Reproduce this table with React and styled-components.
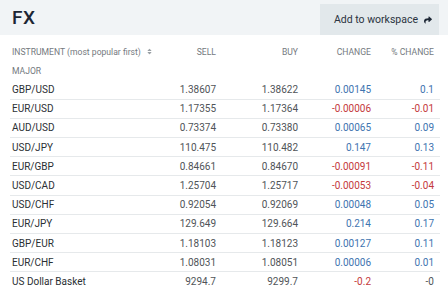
import React from 'react';
import styled, { createGlobalStyle } from 'styled-components';
import { FaShare, FaSort } from 'react-icons/fa';

const GlobalStyle = createGlobalStyle`
  html, body {
    margin: 0;
    padding: 0;
    background: #fff;
    font-family: Roboto, "Liberation Sans", Arial, sans-serif;
  }
`;

const Page = styled.div`
  width: 448px;
  height: 291px;
  overflow: hidden;
  background: #fff;
`;

const Header = styled.header`
  display: flex;
  align-items: flex-end;
  justify-content: space-between;
  height: 35px;
  padding: 0 9px 0 12px;
  background: #f1f4f6;
`;

const Title = styled.h1`
  margin: 0;
  align-self: center;
  font-size: 19px;
  font-weight: 500;
  color: #1c2634;
  letter-spacing: 0.5px;
`;

const WorkspaceBtn = styled.button`
  display: flex;
  align-items: center;
  gap: 6px;
  height: 31px;
  padding: 0 7px 0 14px;
  border: none;
  background: #e2e8eb;
  color: #2a3340;
  font-family: inherit;
  font-size: 10.5px;
  cursor: pointer;
  svg {
    width: 8px;
    height: 8px;
    color: #1c2634;
  }
`;

const Table = styled.div`
  padding: 7px 8px 0 10px;
`;

const Row = styled.div`
  display: grid;
  grid-template-columns: minmax(0, 1fr) 80px 82px 73px 63px;
  align-items: center;
  height: ${p => p.$h || 18.2}px;
  padding: 0 6px 0 2px;
  border-bottom: ${p => (p.$line ? '1px solid #e6e9eb' : '1px solid transparent')};
`;

const HeadCell = styled.div`
  font-size: 8.6px;
  color: #74797e;
  white-space: nowrap;
  display: flex;
  align-items: center;
  justify-content: ${p => (p.$left ? 'flex-start' : 'flex-end')};
  gap: 5px;
  svg {
    width: 7px;
    height: 7px;
    flex: none;
    color: #9aa0a5;
  }
`;

const Name = styled.div`
  font-size: 10px;
  color: #2b2f33;
  white-space: nowrap;
`;

const Num = styled.div`
  font-size: 10px;
  text-align: right;
  color: ${p => (p.$tone === 'up' ? '#3e74b0' : p.$tone === 'down' ? '#c4393c' : '#505458')};
`;

const rows = [
  ['GBP/USD', '1.38607', '1.38622', '0.00145', '0.1'],
  ['EUR/USD', '1.17355', '1.17364', '-0.00006', '-0.01'],
  ['AUD/USD', '0.73374', '0.73380', '0.00065', '0.09'],
  ['USD/JPY', '110.475', '110.482', '0.147', '0.13'],
  ['EUR/GBP', '0.84661', '0.84670', '-0.00091', '-0.11'],
  ['USD/CAD', '1.25704', '1.25717', '-0.00053', '-0.04'],
  ['USD/CHF', '0.92054', '0.92069', '0.00048', '0.05'],
  ['EUR/JPY', '129.649', '129.664', '0.214', '0.17'],
  ['GBP/EUR', '1.18103', '1.18123', '0.00127', '0.11'],
  ['EUR/CHF', '1.08031', '1.08051', '0.00006', '0.01'],
  ['US Dollar Basket', '9294.7', '9299.7', '-0.2', '-0'],
];

const tone = v => (v.startsWith('-') ? 'down' : 'up');

export default function App() {
  return (
    <Page>
      <GlobalStyle />
      <Header>
        <Title>FX</Title>
        <WorkspaceBtn>
          Add to workspace <FaShare />
        </WorkspaceBtn>
      </Header>
      <Table>
        <Row $h={19}>
          <HeadCell $left>
            INSTRUMENT (most popular first) <FaSort />
          </HeadCell>
          <HeadCell>SELL</HeadCell>
          <HeadCell>BUY</HeadCell>
          <HeadCell>CHANGE</HeadCell>
          <HeadCell>% CHANGE</HeadCell>
        </Row>
        <Row $h={17.5}>
          <HeadCell $left>MAJOR</HeadCell>
        </Row>
        {rows.map((r, i) => (
          <Row key={r[0]} $line={i < rows.length - 1}>
            <Name>{r[0]}</Name>
            <Num>{r[1]}</Num>
            <Num>{r[2]}</Num>
            <Num $tone={r[0] === 'US Dollar Basket' ? 'down' : tone(r[3])}>{r[3]}</Num>
            <Num $tone={r[0] === 'US Dollar Basket' ? null : tone(r[4])}>{r[4]}</Num>
          </Row>
        ))}
      </Table>
    </Page>
  );
}
